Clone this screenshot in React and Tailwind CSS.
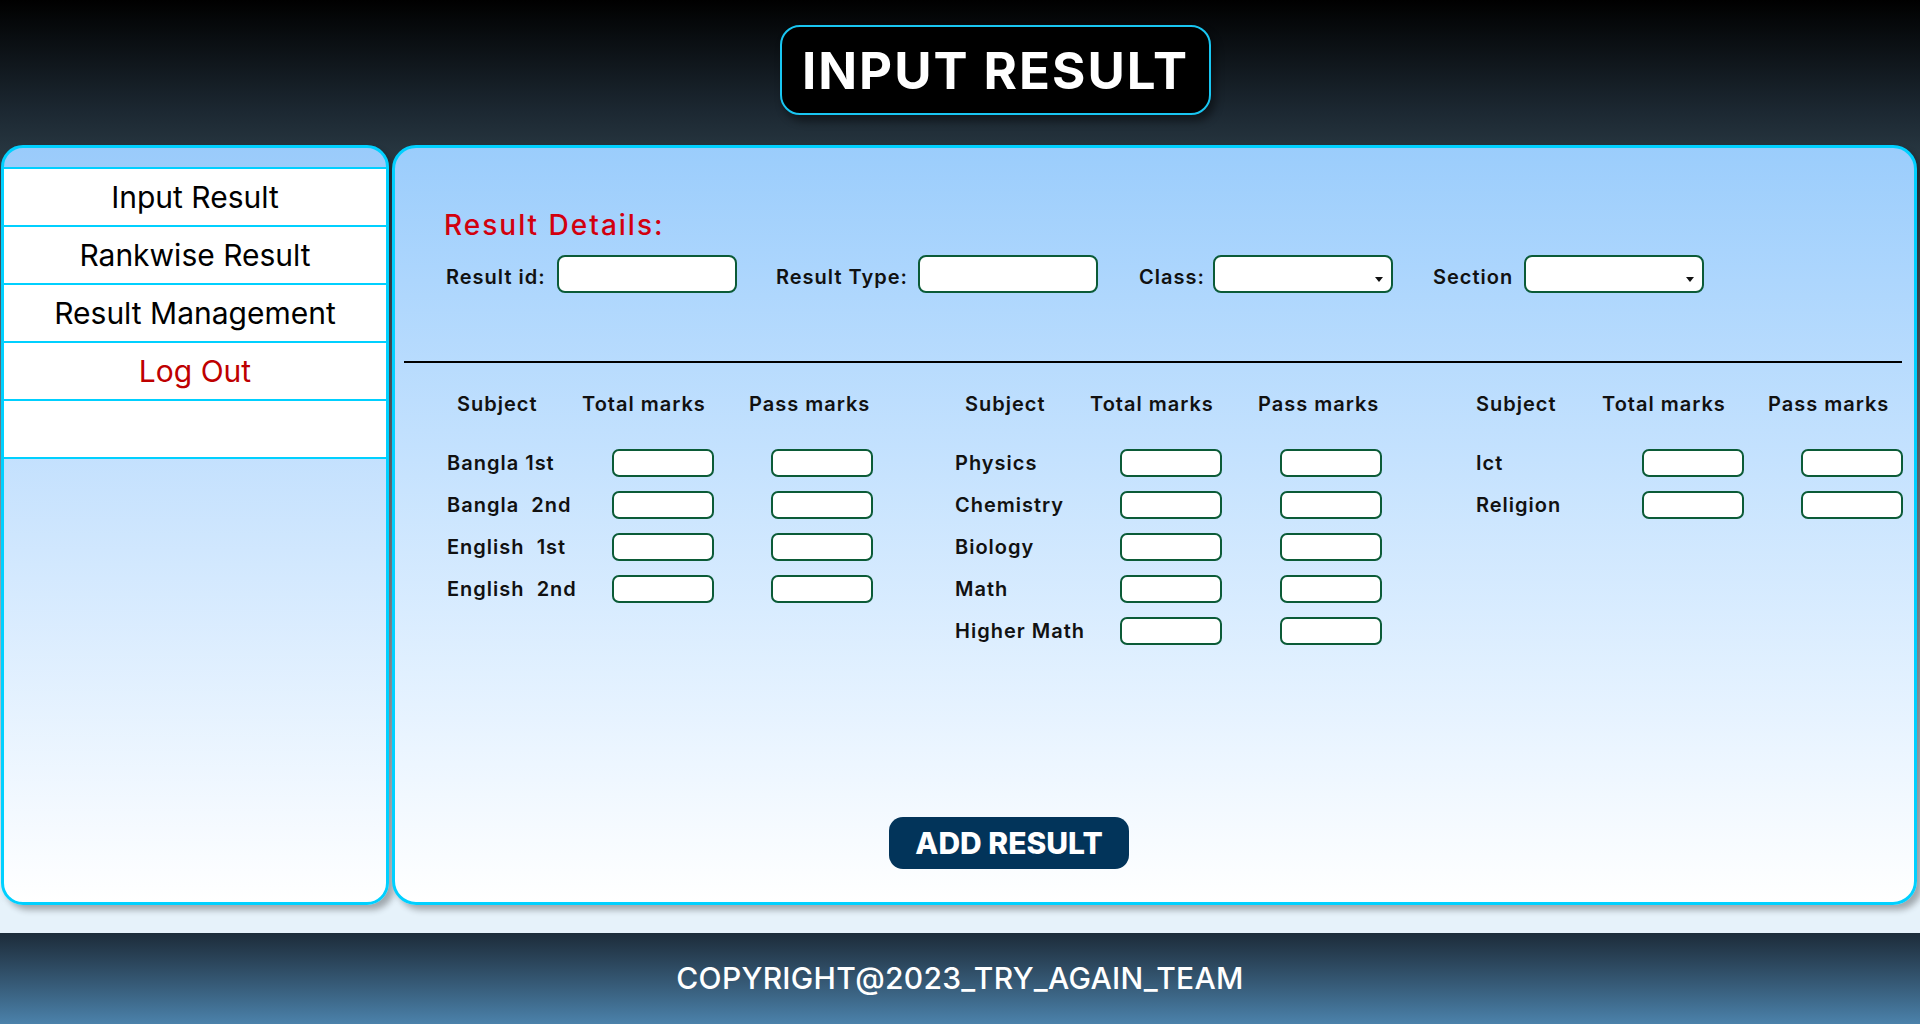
import { useState } from "react";

const menu = [
  { label: "Input Result", color: "text-black" },
  { label: "Rankwise Result", color: "text-black" },
  { label: "Result Management", color: "text-black" },
  { label: "Log Out", color: "text-[#be0000]" },
  { label: "", color: "text-black" },
];

const groups = [
  {
    wrap: "w-[508px]",
    head: ["ml-[10px] w-[125px]", "w-[167px]"],
    label: "w-[165px]",
    gap: "ml-[57px]",
    rows: ["Bangla 1st", "Bangla  2nd", "English  1st", "English  2nd"],
  },
  {
    wrap: "w-[521px]",
    head: ["ml-[10px] w-[125px]", "w-[168px]"],
    label: "w-[165px]",
    gap: "ml-[58px]",
    rows: ["Physics", "Chemistry", "Biology", "Math", "Higher Math"],
  },
  {
    wrap: "flex-1",
    head: ["w-[126px]", "w-[166px]"],
    label: "w-[166px]",
    gap: "ml-[57px]",
    rows: ["Ict", "Religion"],
  },
];

function Caret() {
  return (
    <svg width="8" height="5" viewBox="0 0 8 5" className="mt-[10px]">
      <polygon points="0,0 8,0 4,5" fill="#111" />
    </svg>
  );
}

export default function App() {
  const [form, setForm] = useState({ id: "", type: "" });

  const handleChange = (e) => {
    const { name, value } = e.target;
    setForm({ ...form, [name]: value });
  };

  return (
    <div className="w-[1920px] h-[1024px] flex flex-col overflow-hidden font-['Inter',sans-serif]">
      <div className="h-[933px] flex flex-col bg-[linear-gradient(180deg,#000000_0%,#1c2832_12%,#26353f_16%,#e6f2fa_97%)]">
        {/* Title */}
        <div className="flex pl-[780px] pt-[25px]">
          <div className="w-[431px] h-[90px] flex items-center justify-center bg-black border-2 border-[#19c6f2] rounded-[20px] shadow-[4px_6px_8px_rgba(0,0,0,0.45)]">
            <h1 className="text-white text-[51px] font-bold tracking-[2px] leading-none">INPUT RESULT</h1>
          </div>
        </div>

        <div className="flex gap-[3px] pl-[1px] pr-[3px] mt-[30px] h-[760px]">
          {/* Sidebar */}
          <div className="w-[388px] h-full border-[3px] border-[#00d0ff] rounded-[22px] bg-linear-to-b from-[#9acbfb] to-white shadow-[5px_5px_6px_rgba(0,0,0,0.3)] pt-[19px] overflow-hidden">
            {menu.map((item, i) => (
              <div
                key={i}
                className={`h-[58px] flex items-center justify-center bg-white border-b-2 border-[#00d0ff] ${i === 0 ? "border-t-2 h-[60px]" : ""} ${item.color} text-[30px]`}
              >
                {item.label}
              </div>
            ))}
          </div>

          {/* Main panel */}
          <div className="flex-1 h-full flex flex-col border-[3px] border-[#00d0ff] rounded-[24px] bg-linear-to-b from-[#9bcdfc] to-white shadow-[5px_5px_6px_rgba(0,0,0,0.3)] pt-[60px]">
            <h2 className="pl-[49px] text-[28px] leading-[34px] font-medium tracking-[2px] text-[#d2000e]">Result Details:</h2>

            {/* Result fields */}
            <div className="flex items-center pl-[51px] mt-[13px] text-[20px] font-semibold tracking-[1px] text-[#111]">
              <span className="w-[111px] pt-[5px]">Result id:</span>
              <input name="id" value={form.id} onChange={handleChange} className="w-[180px] h-[38px] bg-white border-2 border-[#0b5b37] rounded-[8px] outline-none" />
              <span className="w-[142px] ml-[39px] pt-[5px]">Result Type:</span>
              <input name="type" value={form.type} onChange={handleChange} className="w-[180px] h-[38px] bg-white border-2 border-[#0b5b37] rounded-[8px] outline-none" />
              <span className="w-[74px] ml-[41px] pt-[5px]">Class:</span>
              <div className="w-[180px] h-[38px] flex items-center justify-end pr-[8px] bg-white border-2 border-[#0b5b37] rounded-[8px]">
                <Caret />
              </div>
              <span className="w-[91px] ml-[40px] pt-[5px]">Section</span>
              <div className="w-[180px] h-[38px] flex items-center justify-end pr-[8px] bg-white border-2 border-[#0b5b37] rounded-[8px]">
                <Caret />
              </div>
            </div>

            <div className="ml-[9px] mr-[12px] mt-[68px] h-[2px] bg-black" />

            {/* Subject marks table */}
            <div className="flex pl-[52px] mt-[29px] text-[20px] font-semibold tracking-[1px] text-[#111]">
              {groups.map((g, gi) => (
                <div key={gi} className={g.wrap}>
                  <div className="flex leading-[24px]">
                    <span className={g.head[0]}>Subject</span>
                    <span className={g.head[1]}>Total marks</span>
                    <span>Pass marks</span>
                  </div>
                  <div className="flex flex-col gap-[14px] mt-[33px]">
                    {g.rows.map((r) => (
                      <div key={r} className="flex items-center h-[28px]">
                        <span className={`${g.label} whitespace-pre`}>{r}</span>
                        <input className="w-[102px] h-[28px] bg-white border-2 border-[#0b5b37] rounded-[7px] outline-none" />
                        <input className={`${g.gap} w-[102px] h-[28px] bg-white border-2 border-[#0b5b37] rounded-[7px] outline-none`} />
                      </div>
                    ))}
                  </div>
                </div>
              ))}
            </div>

            <div className="mt-auto mb-[33px] pl-[494px]">
              <button className="w-[240px] h-[52px] rounded-[14px] bg-[#02345a] text-white text-[30px] font-extrabold">
                ADD RESULT
              </button>
            </div>
          </div>
        </div>
      </div>

      {/* Footer */}
      <div className="h-[91px] flex items-center justify-center bg-linear-to-b from-[#1d2c3a] to-[#4b82ab]">
        <p className="text-white text-[30px] font-medium tracking-[0.3px]">COPYRIGHT@2023_TRY_AGAIN_TEAM</p>
      </div>
    </div>
  );
}
